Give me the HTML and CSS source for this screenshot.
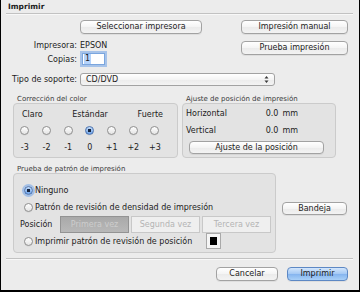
FILE: index.html
```html
<!DOCTYPE html>
<html lang="es">
<head>
    <meta charset="UTF-8">
    <meta name="viewport" content="width=device-width, initial-scale=1.0">
    <title>Imprimir</title>
    <link rel="stylesheet" href="styles.css">
</head>
<body>
    <div class="dialog">
        <div class="dialog-title">Imprimir</div>
        <div class="rule"></div>

        <div class="top">
            <div class="form">
                <div class="form-row row-printer-btn">
                    <span class="form-label"></span>
                    <button class="btn btn-select">Seleccionar impresora</button>
                </div>
                <div class="form-row row-printer">
                    <span class="form-label">Impresora:</span>
                    <span>EPSON</span>
                </div>
                <div class="form-row row-copies">
                    <span class="form-label">Copias:</span>
                    <span class="copies-field"><span class="copies-sel">1</span></span>
                </div>
            </div>
            <div class="side-buttons">
                <button class="btn btn-side">Impresión manual</button>
                <button class="btn btn-side">Prueba impresión</button>
            </div>
        </div>

        <div class="form-row row-media">
            <span class="form-label">Tipo de soporte:</span>
            <div class="popup">
                <span>CD/DVD</span>
                <svg class="popup-arrows" width="5" height="9" viewBox="0 0 5 9">
                    <path d="M0.5 3.5 L2.5 1 L4.5 3.5 Z M0.5 5.5 L2.5 8 L4.5 5.5 Z" fill="#3a3a3a"/>
                </svg>
            </div>
        </div>

        <div class="groups">
            <section class="group color-group">
                <div class="group-title">Corrección del color</div>
                <div class="group-box color-box">
                    <div class="color-labels">
                        <span>Claro</span>
                        <span>Estándar</span>
                        <span>Fuerte</span>
                    </div>
                    <div class="color-scale">
                        <div class="scale-item"><span class="radio"></span><span>-3</span></div>
                        <div class="scale-item"><span class="radio"></span><span>-2</span></div>
                        <div class="scale-item"><span class="radio"></span><span>-1</span></div>
                        <div class="scale-item"><span class="radio on"></span><span>0</span></div>
                        <div class="scale-item"><span class="radio"></span><span>+1</span></div>
                        <div class="scale-item"><span class="radio"></span><span>+2</span></div>
                        <div class="scale-item"><span class="radio"></span><span>+3</span></div>
                    </div>
                </div>
            </section>

            <section class="group position-group">
                <div class="group-title">Ajuste de posición de impresión</div>
                <div class="group-box pos-box">
                    <div class="pos-row">
                        <span class="pos-label">Horizontal</span>
                        <span class="pos-value">0.0</span>
                        <span>mm</span>
                    </div>
                    <div class="pos-row">
                        <span class="pos-label">Vertical</span>
                        <span class="pos-value">0.0</span>
                        <span>mm</span>
                    </div>
                    <button class="btn btn-adjust">Ajuste de la posición</button>
                </div>
            </section>
        </div>

        <div class="pattern-row">
            <section class="group pattern-group">
                <div class="group-title">Prueba de patrón de impresión</div>
                <div class="group-box pattern-box">
                    <div class="opt">
                        <span class="radio on focus"></span>
                        <span>Ninguno</span>
                    </div>
                    <div class="opt opt-density">
                        <span class="radio"></span>
                        <span>Patrón de revisión de densidad de impresión</span>
                    </div>
                    <div class="seg-row">
                        <span class="seg-label">Posición</span>
                        <span class="seg seg-pressed">Primera vez</span>
                        <span class="seg">Segunda vez</span>
                        <span class="seg">Tercera vez</span>
                    </div>
                    <div class="opt opt-position">
                        <span class="radio"></span>
                        <span>Imprimir patrón de revisión de posición</span>
                        <span class="swatch"><span class="swatch-color"></span></span>
                    </div>
                </div>
            </section>
            <button class="btn btn-tray">Bandeja</button>
        </div>

        <div class="rule rule-bottom"></div>

        <div class="footer">
            <button class="btn btn-cancel">Cancelar</button>
            <button class="btn btn-default">Imprimir</button>
        </div>
    </div>
</body>
</html>
```

FILE: styles.css
```css
* {
    box-sizing: border-box;
}

body {
    margin: 0;
    font-family: "DejaVu Sans", "Lucida Grande", sans-serif;
    font-size: 8px;
    color: #1c1c1c;
    background: #ececec;
}

.dialog {
    width: 360px;
    height: 292px;
    background: #ececec;
    border: 1px solid #000;
    border-top: none;
    border-bottom-width: 2px;
    overflow: hidden;
}

.dialog-title {
    height: 13px;
    line-height: 13px;
    padding-left: 7px;
    font-weight: bold;
    font-size: 7.5px;
}

.rule {
    height: 2px;
    margin: 0 6px 0 5px;
    border-top: 1px solid #c2c2c2;
    border-bottom: 1px solid #f8f8f8;
}

/* buttons */
.btn {
    font: inherit;
    color: inherit;
    height: 14px;
    padding: 0;
    line-height: 12px;
    text-align: center;
    border: 1px solid #a2a2a2;
    border-radius: 4px;
    background: linear-gradient(#ffffff, #f4f4f4 50%, #ebebeb 51%, #f3f3f3);
    box-shadow: 0 1px 0 rgba(0, 0, 0, 0.06);
}

.btn-select {
    width: 122px;
}

.btn-side {
    width: 107px;
}

.btn-adjust {
    width: 135px;
    height: 13px;
    margin: 5px 0 0 6px;
}

.btn-tray {
    width: 65px;
    height: 13px;
    margin: 0 0 2px 6px;
}

.btn-cancel {
    width: 62px;
}

.btn-default {
    width: 61px;
    border-color: #5d88c4;
    background: linear-gradient(#d3e6fc, #a3c8f4 50%, #84b4ef 51%, #a9d0f8);
}

/* top form */
.top {
    display: flex;
    justify-content: space-between;
    padding-right: 11px;
    margin-top: 5px;
}

.form {
    display: flex;
    flex-direction: column;
}

.form-row {
    display: flex;
    align-items: center;
}

.form-label {
    width: 76px;
    margin-right: 3px;
    text-align: right;
    flex-shrink: 0;
}

.row-printer-btn {
    height: 14px;
}

.row-printer {
    height: 12px;
    margin-top: 5px;
}

.row-copies {
    height: 16px;
}

.row-media {
    height: 13px;
    margin-top: 6px;
}

.side-buttons {
    display: flex;
    flex-direction: column;
    gap: 7px;
}

.copies-field {
    width: 23px;
    height: 12px;
    margin-left: 2px;
    background: #fff;
    border: 1px solid #7ba6de;
    box-shadow: 0 0 0 2px rgba(112, 162, 232, 0.55);
    line-height: 10px;
}

.copies-sel {
    display: inline-block;
    margin-left: 1px;
    padding: 0 1px;
    background: #b4d3fb;
}

.popup {
    width: 195px;
    height: 13px;
    display: flex;
    align-items: center;
    justify-content: space-between;
    padding: 0 5px 0 5px;
    border: 1px solid #a2a2a2;
    border-radius: 3px;
    background: linear-gradient(#ffffff, #f4f4f4 50%, #ebebeb 51%, #f3f3f3);
}

/* groups */
.groups {
    display: flex;
    gap: 4px;
    margin: 9px 0 0 12px;
}

.group-title {
    height: 8px;
    line-height: 8px;
    padding-left: 4px;
    font-size: 7px;
    color: #3a3a3a;
}

.group-box {
    background: #e3e3e3;
    border: 1px solid #cbcbcb;
    border-radius: 4px;
}

.color-box {
    width: 165px;
    height: 55px;
}

.color-labels {
    display: flex;
    justify-content: space-between;
    height: 16px;
    line-height: 10px;
    padding: 6px 14px 0 8px;
}

.color-scale {
    display: grid;
    grid-template-columns: repeat(7, 21.7px);
    margin-top: 6px;
}

.scale-item {
    display: flex;
    flex-direction: column;
    align-items: center;
    gap: 8px;
    line-height: 10px;
}

.radio {
    display: inline-block;
    width: 9px;
    height: 9px;
    flex-shrink: 0;
    border-radius: 50%;
    border: 1px solid #8f8f8f;
    background: linear-gradient(#fefefe, #e4e4e4);
    box-shadow: 0 0.5px 0 rgba(0, 0, 0, 0.08);
}

.radio.on {
    border-color: #4d74b0;
    background: radial-gradient(circle, #17243d 0 1.5px, transparent 2px),
                linear-gradient(#c2dbf8, #6ea3e9);
}

.radio.focus {
    box-shadow: 0 0 0 2px rgba(110, 162, 234, 0.55);
}

.pos-box {
    width: 154px;
    height: 55px;
    padding-top: 3px;
}

.pos-row {
    display: flex;
    align-items: center;
    height: 12px;
    padding: 0 37px 0 3px;
}

.pos-row + .pos-row {
    margin-top: 5px;
}

.pos-label {
    flex: 1;
}

.pos-value {
    margin-right: 4px;
}

/* pattern */
.pattern-row {
    display: flex;
    align-items: center;
    margin: 7px 0 0 12px;
}

.pattern-box {
    width: 263px;
    height: 80px;
    padding-top: 9px;
}

.opt {
    display: flex;
    align-items: center;
    gap: 2px;
    height: 14px;
    padding-left: 10px;
}

.opt-density {
    margin-top: 3px;
}

.opt-position {
    height: 16px;
}

.seg-row {
    display: flex;
    align-items: center;
    gap: 2px;
    height: 17px;
    margin-top: 2px;
    padding-left: 6px;
}

.seg-label {
    width: 38px;
}

.seg {
    width: 69px;
    height: 17px;
    line-height: 15px;
    text-align: center;
    color: #b4b4b4;
    border: 1px solid #c8c8c8;
    background: #efefef;
}

.seg-pressed {
    color: #cdcdcd;
    border-color: #939393;
    background: linear-gradient(#a9a9a9, #b8b8b8);
}

.swatch {
    width: 15px;
    height: 16px;
    margin-left: 12px;
    padding: 3px;
    border: 1px solid #a9a9a9;
    background: #f5f5f5;
}

.swatch-color {
    display: block;
    width: 100%;
    height: 100%;
    background: #000;
}

.rule-bottom {
    margin-top: 5px;
}

.footer {
    display: flex;
    justify-content: flex-end;
    gap: 9px;
    padding-right: 11px;
    margin-top: 7px;
}
```
